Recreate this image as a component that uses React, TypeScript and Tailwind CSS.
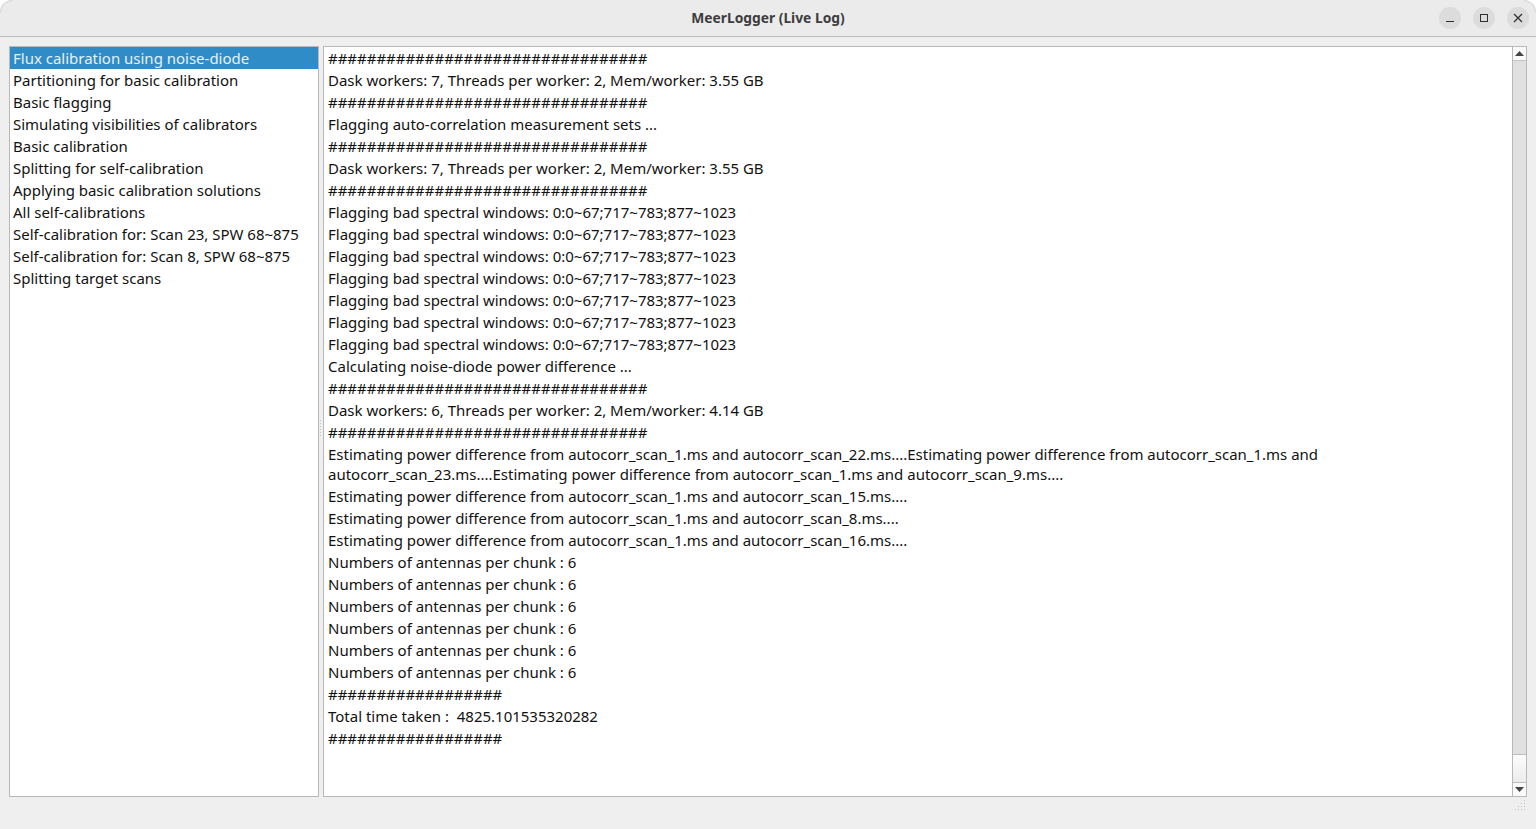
const H33 = "#################################";
const H = "##################";
const flag = "Flagging bad spectral windows: 0:0~67;717~783;877~1023";
const dask7 = "Dask workers: 7, Threads per worker: 2, Mem/worker: 3.55 GB";
const ant = "Numbers of antennas per chunk : 6";

const steps = [
  "Flux calibration using noise-diode",
  "Partitioning for basic calibration",
  "Basic flagging",
  "Simulating visibilities of calibrators",
  "Basic calibration",
  "Splitting for self-calibration",
  "Applying basic calibration solutions",
  "All self-calibrations",
  "Self-calibration for: Scan 23, SPW 68~875",
  "Self-calibration for: Scan 8, SPW 68~875",
  "Splitting target scans",
];

const logs = [
  H33, dask7, H33,
  "Flagging auto-correlation measurement sets ...",
  H33, dask7, H33,
  flag, flag, flag, flag, flag, flag, flag,
  "Calculating noise-diode power difference ...",
  H33,
  "Dask workers: 6, Threads per worker: 2, Mem/worker: 4.14 GB",
  H33,
  "Estimating power difference from autocorr_scan_1.ms and autocorr_scan_22.ms....Estimating power difference from autocorr_scan_1.ms and autocorr_scan_23.ms....Estimating power difference from autocorr_scan_1.ms and autocorr_scan_9.ms....",
  "Estimating power difference from autocorr_scan_1.ms and autocorr_scan_15.ms....",
  "Estimating power difference from autocorr_scan_1.ms and autocorr_scan_8.ms....",
  "Estimating power difference from autocorr_scan_1.ms and autocorr_scan_16.ms....",
  ant, ant, ant, ant, ant, ant,
  H,
  "Total time taken :  4825.101535320282",
  H,
];

export default function App() {
  return (
    <div className="relative h-[829px] w-[1536px] overflow-hidden bg-white font-['Noto_Sans',sans-serif] text-[14.99px] text-[#111111]">
      <div className="flex h-full flex-col rounded-t-[12px] bg-[#efefef]">
        <header className="relative flex h-[37px] shrink-0 items-center justify-center rounded-t-[12px] border-b border-[#bdbdbd] bg-[#ebebeb]">
          <span className="text-[13.8px] font-bold text-[#3d3d3d]">MeerLogger (Live Log)</span>
          <div className="absolute right-[7px] top-[7px] flex gap-[12px]">
            <button className="flex size-[22px] items-center justify-center rounded-full bg-[#dcdcdc]">
              <svg width="10" height="10" viewBox="0 0 10 10"><path d="M1 8.5h8" stroke="#2e2e2e" strokeWidth="1" /></svg>
            </button>
            <button className="flex size-[22px] items-center justify-center rounded-full bg-[#dcdcdc]">
              <svg width="10" height="10" viewBox="0 0 10 10"><rect x="1.5" y="1.5" width="7" height="7" fill="none" stroke="#2e2e2e" strokeWidth="1" /></svg>
            </button>
            <button className="flex size-[22px] items-center justify-center rounded-full bg-[#dcdcdc]">
              <svg width="10" height="10" viewBox="0 0 10 10"><path d="M1 1l8 8M9 1l-8 8" stroke="#2e2e2e" strokeWidth="1.2" /></svg>
            </button>
          </div>
        </header>

        <main className="flex h-[760px] shrink-0 px-[9px] pt-[9px]">
          <ul className="h-full w-[310px] shrink-0 border border-[#b8b8b8] bg-white">
            {steps.map((s, i) => (
              <li key={s} className={`h-[22px] pl-[3px] leading-[22px] whitespace-nowrap ${i === 0 ? "bg-[#308cc6] text-[#e6f1f8]" : ""}`}>{s}</li>
            ))}
          </ul>

          <div className="relative w-[4px] shrink-0">
            <span className="absolute left-[1px] top-[374px] flex flex-col gap-[2px]">
              {[0, 1, 2, 3, 4, 5].map((d) => <i key={d} className="block size-[1px] bg-[#c4c4c4]" />)}
            </span>
          </div>

          <div className="flex h-full w-[1204px] shrink-0 border border-[#b8b8b8] bg-white">
            <div className="min-w-0 flex-1 pl-[4px] pr-[190px]">
              {logs.map((l, i) => (
                <p key={i} className="py-px leading-[20px] whitespace-pre-wrap">{l}</p>
              ))}
            </div>
            <div className="flex w-[14px] shrink-0 flex-col border-l border-[#b8b8b8] bg-[#efefef]">
              <div className="flex h-[14px] shrink-0 items-center justify-center border-b border-[#c4c4c4] bg-[#fafafa]">
                <svg width="9" height="5" viewBox="0 0 9 5"><path d="M4.5 0l4.5 5H0z" fill="#444444" /></svg>
              </div>
              <div className="h-[694px] shrink-0 border-b border-[#bdbdbd] bg-[#e0e0e0]" />
              <div className="flex-1 bg-gradient-to-b from-[#fcfcfc] to-[#ececec]" />
              <div className="flex h-[14px] shrink-0 items-center justify-center border-t border-[#bdbdbd] bg-[#fafafa]">
                <svg width="9" height="5" viewBox="0 0 9 5"><path d="M4.5 5L9 0H0z" fill="#444444" /></svg>
              </div>
            </div>
          </div>
        </main>

        <footer className="relative flex-1">
          <svg className="absolute right-[10px] top-[3px]" width="11" height="11" viewBox="0 0 11 11" fill="#c0c0c0">
            <rect x="9" y="0" width="1" height="1" /><rect x="6" y="3" width="1" height="1" /><rect x="9" y="3" width="1" height="1" />
            <rect x="3" y="6" width="1" height="1" /><rect x="6" y="6" width="1" height="1" /><rect x="9" y="6" width="1" height="1" />
            <rect x="0" y="9" width="1" height="1" /><rect x="3" y="9" width="1" height="1" /><rect x="6" y="9" width="1" height="1" /><rect x="9" y="9" width="1" height="1" />
          </svg>
        </footer>
      </div>
      <svg className="absolute left-0 top-0" width="13" height="13" viewBox="0 0 13 13"><path d="M0.5 12.5A12 12 0 0 1 12.5 0.5" fill="none" stroke="#d6d6d6" /></svg>
      <svg className="absolute right-0 top-0" width="13" height="13" viewBox="0 0 13 13"><path d="M0.5 0.5A12 12 0 0 1 12.5 12.5" fill="none" stroke="#d6d6d6" /></svg>
    </div>
  );
}
